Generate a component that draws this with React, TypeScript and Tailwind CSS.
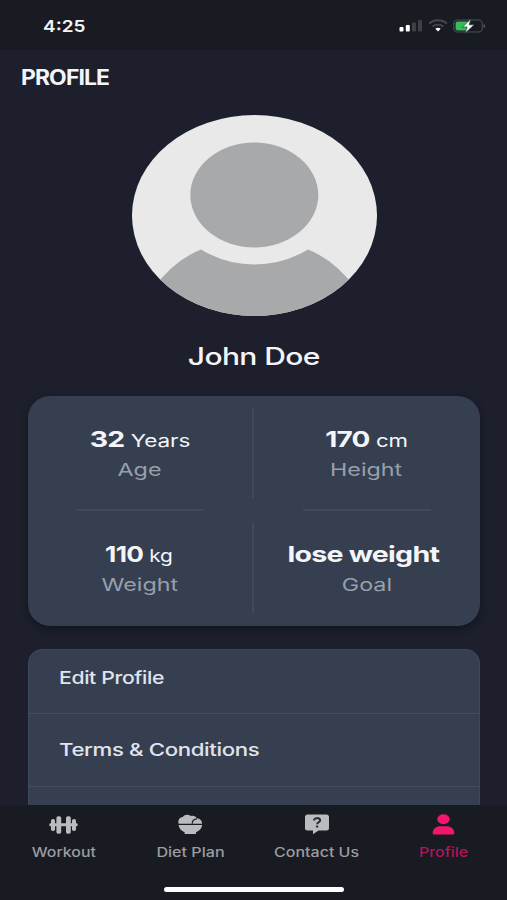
import type { ReactNode } from 'react'

type Stat = {
  value: string
  unit?: string
  label: string
  stretch: string
}

const STATS: Stat[] = [
  { value: '32', unit: 'Years', label: 'Age', stretch: 'scale-x-[1.29]' },
  { value: '170', unit: 'cm', label: 'Height', stretch: 'scale-x-[1.27]' },
  { value: '110', unit: 'kg', label: 'Weight', stretch: 'translate-x-[-0.5px] scale-x-[1.19]' },
  { value: 'lose weight', label: 'Goal', stretch: 'translate-x-[-3px] scale-x-[1.3]' },
]

const MENU = [
  { label: 'Edit Profile', row: 'h-[64px] pb-[7px]', stretch: 'scale-x-[1.21]' },
  { label: 'Terms & Conditions', row: 'h-[73px]', stretch: 'scale-x-[1.27]' },
  { label: '', row: 'h-[73px]', stretch: '' },
]

function DumbbellIcon() {
  return (
    <svg width="30" height="20" viewBox="0 0 30 20" fill="currentColor">
      <rect x="1.3" y="8.3" width="28.4" height="3" rx="1.2" />
      <rect x="3" y="4" width="4" height="12" rx="1.8" />
      <rect x="8.4" y="1.2" width="4.8" height="17.6" rx="1.8" />
      <rect x="18" y="1.2" width="4.8" height="17.6" rx="1.8" />
      <rect x="24" y="4" width="4" height="12" rx="1.8" />
    </svg>
  )
}

function BowlIcon() {
  return (
    <svg width="26" height="21" viewBox="0 0 26 21" fill="currentColor">
      <path d="M1.6 9.8C0.8 6.5 2.4 3.2 5.8 3C7.4 0.4 11.2 0 13.7 1.9C16.2 1.2 19 2 19.8 4.2C23.2 4.6 25.2 6.8 25.1 9.8Z" />
      <path d="M1.6 11H25.2C24.8 14.7 22.2 17 19 18.2V20H7.6V18.2C4.4 17 2 14.7 1.6 11Z" />
      <path d="M15.2 9.8C15.2 7 17.1 5 20 4.9" fill="none" stroke="#181b22" strokeWidth="1.1" />
    </svg>
  )
}

function HelpIcon() {
  return (
    <svg width="26" height="21" viewBox="0 0 26 21">
      <path
        d="M3.5 0.6H22.5C24 0.6 25 1.6 25 2.9V14.3C25 15.6 24 16.6 22.5 16.6H14.5L9 20.3V16.6H3.5C2 16.6 1 15.6 1 14.3V2.9C1 1.6 2 0.6 3.5 0.6Z"
        fill="currentColor"
      />
      <path d="M10 6.5C10 3.3 16.2 3.3 16.2 6.3C16.2 8.3 13.2 8.2 13.1 10.2" fill="none" stroke="#252830" strokeWidth="1.9" />
      <ellipse cx="13.1" cy="12.6" rx="1.3" ry="1.1" fill="#252830" />
    </svg>
  )
}

function PersonIcon() {
  return (
    <svg width="24" height="21" viewBox="0 0 24 21" fill="currentColor">
      <ellipse cx="11.5" cy="5.3" rx="6.2" ry="5" />
      <path d="M0.7 19C0.7 14.7 4.2 12.2 8.7 12.2H14.3C18.8 12.2 22.3 14.7 22.3 19C22.3 20 21.8 20.6 20.8 20.6H2.2C1.2 20.6 0.7 20 0.7 19Z" />
    </svg>
  )
}

const TABS: { label: string; icon: ReactNode; color: string; labelColor: string; stretch: string }[] = [
  { label: 'Workout', icon: <DumbbellIcon />, color: 'text-[#babbbf]', labelColor: 'text-[#9b9ca1]', stretch: 'translate-x-[0.5px] scale-x-[1.22]' },
  { label: 'Diet Plan', icon: <BowlIcon />, color: 'text-[#babbbf]', labelColor: 'text-[#9b9ca1]', stretch: 'scale-x-[1.24]' },
  { label: 'Contact Us', icon: <HelpIcon />, color: 'text-[#babbbf]', labelColor: 'text-[#9b9ca1]', stretch: 'scale-x-[1.23]' },
  { label: 'Profile', icon: <PersonIcon />, color: 'text-[#f5146e]', labelColor: 'text-[#b01658]', stretch: 'translate-x-[-0.5px] scale-x-[1.22]' },
]

function StatusIcons() {
  return (
    <svg width="88" height="16" viewBox="0 0 88 16">
      {/* signal */}
      <rect x="0.5" y="9" width="4" height="4.5" rx="0.9" fill="#fff" />
      <rect x="6.8" y="7" width="4" height="6.5" rx="0.9" fill="#fff" />
      <rect x="13" y="4.5" width="4" height="9" rx="0.9" fill="#3d4046" />
      <rect x="19" y="2" width="4" height="11.5" rx="0.9" fill="#3d4046" />
      {/* wifi */}
      <path d="M30 5.5C35 1.3 43 1.3 48 5.5" fill="none" stroke="#44474d" strokeWidth="2" />
      <path d="M33.5 8.6C36.7 6 41.3 6 44.5 8.6" fill="none" stroke="#44474d" strokeWidth="1.9" />
      <path d="M36.3 10.8Q39 8.9 41.7 10.8L39 13.5Z" fill="#fff" />
      {/* battery */}
      <rect x="54.8" y="2" width="28.4" height="12" rx="3.6" fill="none" stroke="#4c5055" strokeWidth="1.1" />
      <rect x="56.6" y="3.6" width="13.5" height="8.8" rx="2" fill="#35bd59" />
      <path d="M84.6 6.2C86.8 6.6 86.8 9.4 84.6 9.8Z" fill="#5d6064" />
      <path d="M72 0.8L63.4 9H68.2L66 15.2L75.2 6.8H70.2Z" fill="#fff" stroke="#1d3a2b" strokeWidth="0.7" />
    </svg>
  )
}

function Avatar() {
  return (
    <svg className="block h-[201px] w-[246px]" viewBox="0 0 246 201">
      <defs>
        <clipPath id="avatar-clip">
          <ellipse cx="123.5" cy="100.5" rx="122.5" ry="100.5" />
        </clipPath>
      </defs>
      <g clipPath="url(#avatar-clip)">
        <rect width="246" height="201" fill="#e9e9e9" />
        <ellipse cx="123.3" cy="80" rx="64" ry="52.5" fill="#a7a9aa" />
        <path d="M21 175Q43 145 70 134.5Q95 149.5 123.5 149.5T177 134.5Q204 145 226 175V201H21Z" fill="#a7a9aa" />
      </g>
    </svg>
  )
}

export default function App() {
  return (
    <div className="flex h-[900px] w-[507px] flex-col overflow-hidden bg-[#1d202c] font-['Inter',sans-serif] text-[#f4f5f9]">
      <header className="flex h-[50px] shrink-0 items-start justify-between bg-[#181b22] pt-[18px] pr-[20px] pl-[43px]">
        <span className="mt-[-2px] origin-left scale-x-[1.15] text-[16.5px] leading-[20px] font-semibold">4:25</span>
        <StatusIcons />
      </header>

      <main className="flex min-h-0 flex-1 flex-col items-center overflow-hidden">
        <h1 className="mt-[16px] ml-[20.5px] origin-left scale-x-[1.09] self-start text-[21px] leading-[24px] font-bold tracking-[-0.8px]">
          PROFILE
        </h1>

        <div className="mt-[25px] shrink-0">
          <Avatar />
        </div>
        <h2 className="mt-[26px] scale-x-[1.25] text-[24px] leading-[30px] font-medium tracking-[-0.5px]">John Doe</h2>

        {/* Body stats */}
        <section className="mt-[24px] grid h-[230px] w-[452px] shrink-0 grid-cols-2 grid-rows-2 rounded-[22px] bg-[#363f50] shadow-[0_3px_7px_rgba(8,12,22,0.55)]">
          {STATS.map((s, i) => (
            <div key={s.label} className="flex">
              <div className="flex flex-1 flex-col items-center pt-[29px]">
                <p className={`h-[29px] text-[22px] leading-[29px] font-bold tracking-[-0.6px] whitespace-nowrap ${s.stretch}`}>
                  {s.value}
                  {s.unit && <span className="ml-[5px] text-[17.5px] font-normal tracking-[-0.1px]">{s.unit}</span>}
                </p>
                <p className="mt-[2px] scale-x-[1.33] text-[17.5px] leading-[28px] text-[#989fac]">{s.label}</p>
                {i < 2 && <div className="mt-auto h-[2px] w-[128px] bg-[#424a5a]" />}
              </div>
              {i % 2 === 0 && <div className="mt-[12px] h-[90px] w-[2px] bg-[#424a5a]" />}
            </div>
          ))}
        </section>

        {/* Settings list */}
        <section className="mt-[23px] w-[452px] shrink-0 rounded-t-[14px] border border-[#3f4858] bg-[#363f50]">
          {MENU.map((item, i) => (
            <div key={i} className={`flex items-center border-b border-[#454e5e] pl-[30px] ${item.row}`}>
              <span className={`origin-left text-[17.5px] font-medium tracking-[-0.3px] text-[#e0e4ed] ${item.stretch}`}>
                {item.label}
              </span>
            </div>
          ))}
        </section>
      </main>

      <nav className="flex h-[95px] shrink-0 flex-col items-center bg-[#181b22]">
        <div className="grid w-full grid-cols-4">
          {TABS.map((tab) => (
            <div key={tab.label} className="flex flex-col items-center pt-[9px]">
              <div className={`flex h-[21px] items-center ${tab.color}`}>{tab.icon}</div>
              <span className={`mt-[8.5px] text-[13px] leading-[17px] font-medium whitespace-nowrap ${tab.labelColor} ${tab.stretch}`}>
                {tab.label}
              </span>
            </div>
          ))}
        </div>
        <div className="mt-[26.5px] ml-px h-[5px] w-[180px] rounded-full bg-white" />
      </nav>
    </div>
  )
}
